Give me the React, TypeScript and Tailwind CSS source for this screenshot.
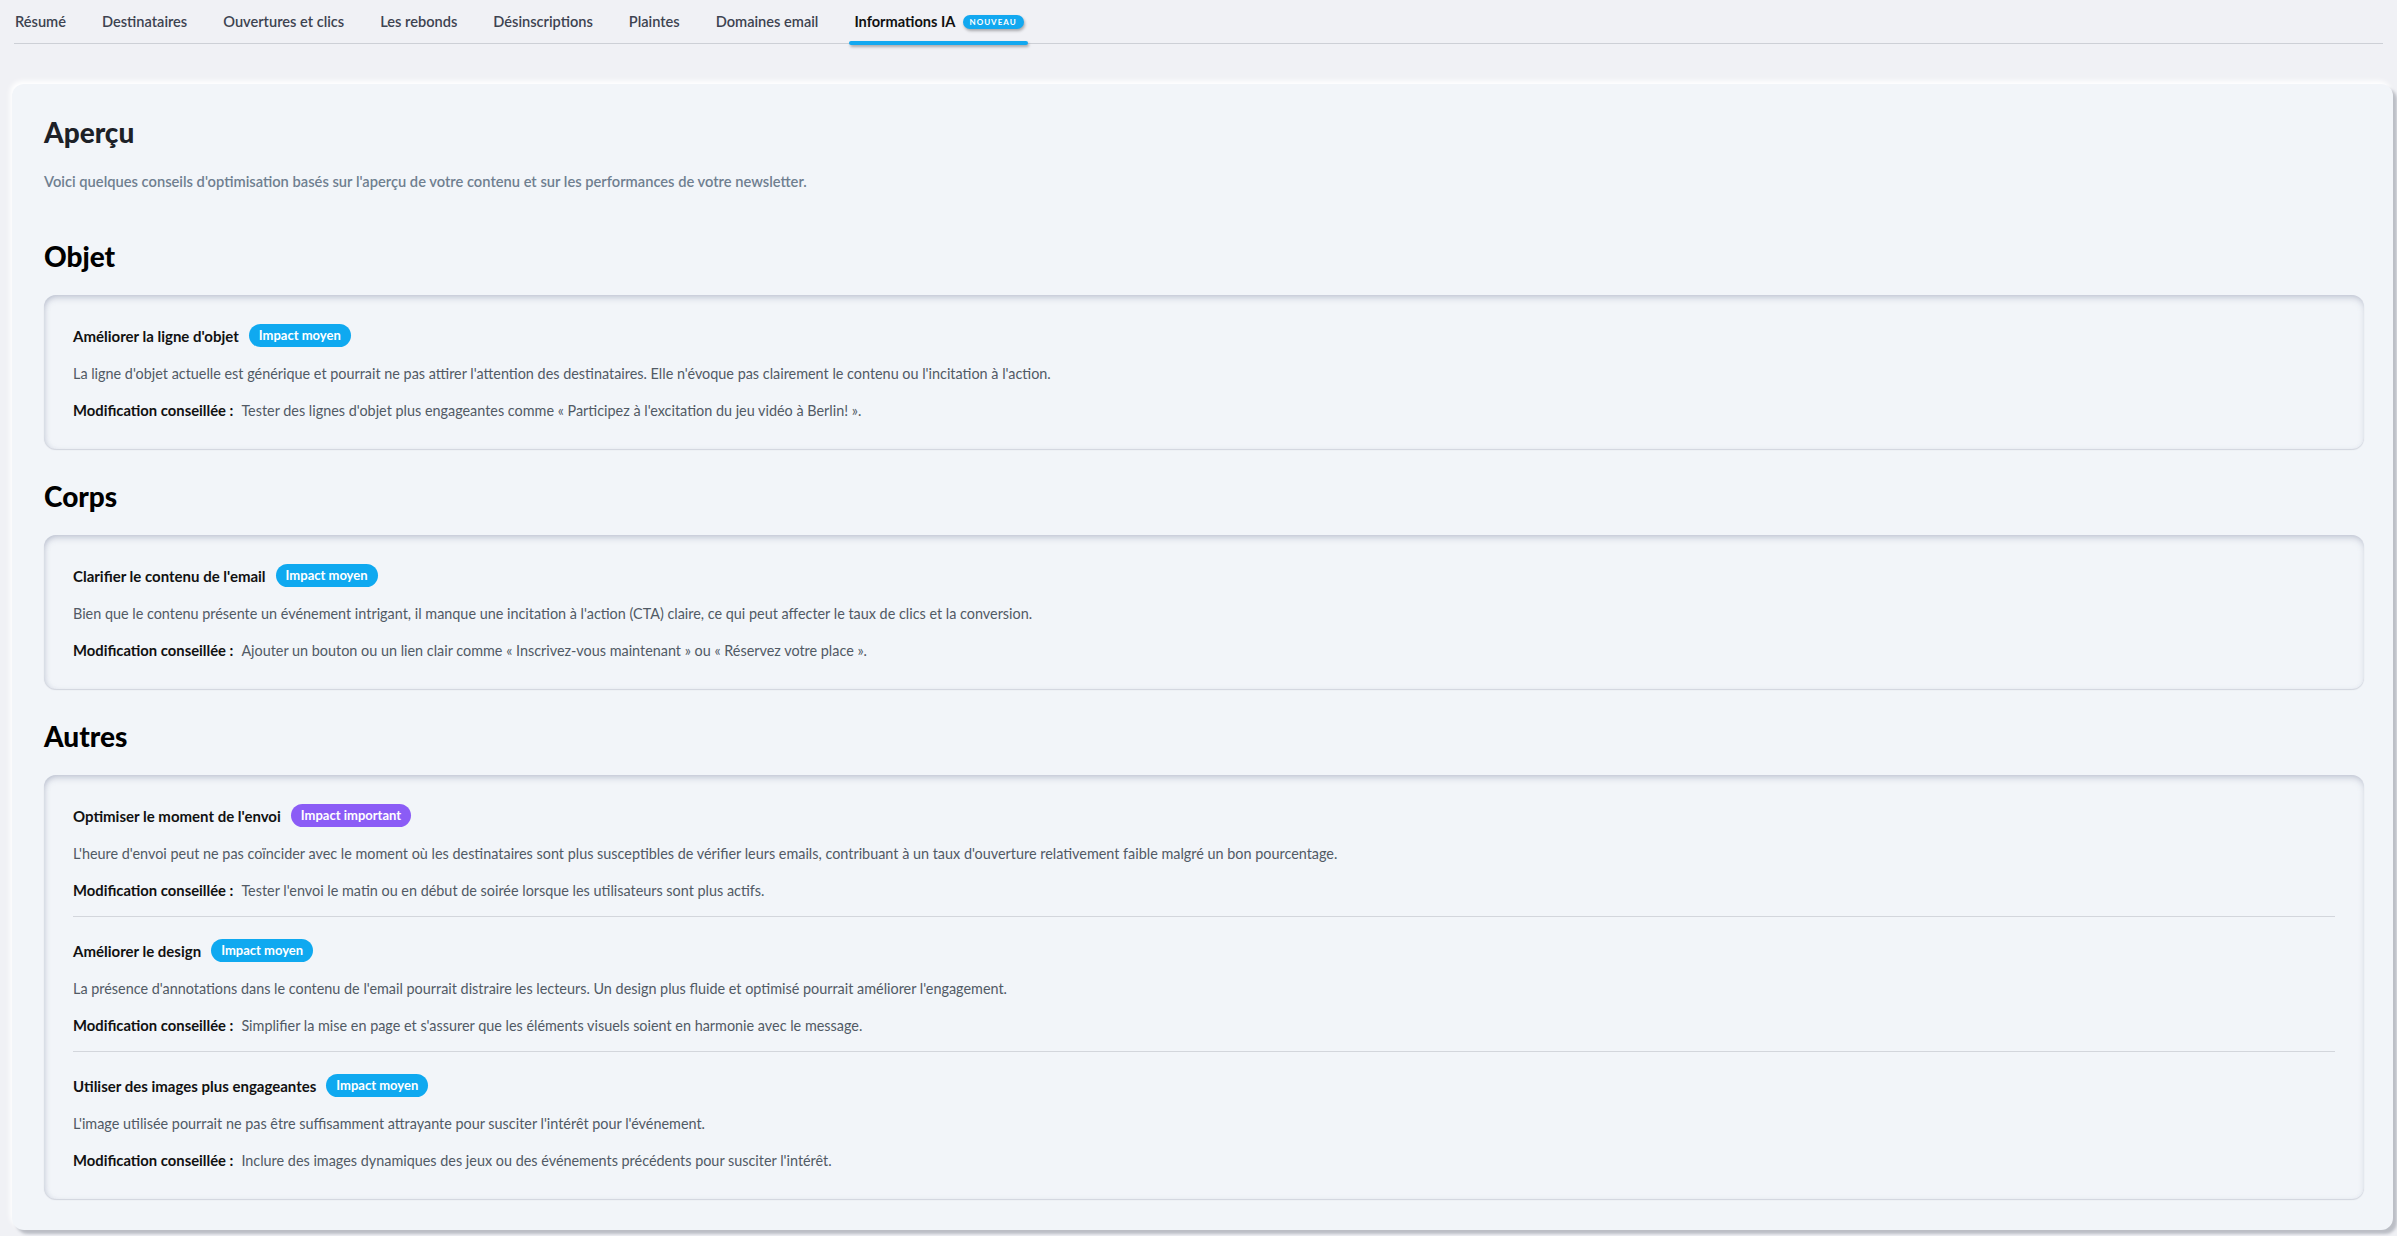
import React from 'react';

type Impact = 'moyen' | 'important';

type Tip = {
  title: string;
  impact: Impact;
  description: string;
  change: string;
};

const tabs = [
  'Résumé',
  'Destinataires',
  'Ouvertures et clics',
  'Les rebonds',
  'Désinscriptions',
  'Plaintes',
  'Domaines email',
];

const sections: { name: string; tips: Tip[] }[] = [
  {
    name: 'Objet',
    tips: [
      {
        title: "Améliorer la ligne d'objet",
        impact: 'moyen',
        description:
          "La ligne d'objet actuelle est générique et pourrait ne pas attirer l'attention des destinataires. Elle n'évoque pas clairement le contenu ou l'incitation à l'action.",
        change: "Tester des lignes d'objet plus engageantes comme « Participez à l'excitation du jeu vidéo à Berlin! ».",
      },
    ],
  },
  {
    name: 'Corps',
    tips: [
      {
        title: "Clarifier le contenu de l'email",
        impact: 'moyen',
        description:
          "Bien que le contenu présente un événement intrigant, il manque une incitation à l'action (CTA) claire, ce qui peut affecter le taux de clics et la conversion.",
        change: 'Ajouter un bouton ou un lien clair comme « Inscrivez-vous maintenant » ou « Réservez votre place ».',
      },
    ],
  },
  {
    name: 'Autres',
    tips: [
      {
        title: "Optimiser le moment de l'envoi",
        impact: 'important',
        description:
          "L'heure d'envoi peut ne pas coïncider avec le moment où les destinataires sont plus susceptibles de vérifier leurs emails, contribuant à un taux d'ouverture relativement faible malgré un bon pourcentage.",
        change: "Tester l'envoi le matin ou en début de soirée lorsque les utilisateurs sont plus actifs.",
      },
      {
        title: 'Améliorer le design',
        impact: 'moyen',
        description:
          "La présence d'annotations dans le contenu de l'email pourrait distraire les lecteurs. Un design plus fluide et optimisé pourrait améliorer l'engagement.",
        change: "Simplifier la mise en page et s'assurer que les éléments visuels soient en harmonie avec le message.",
      },
      {
        title: 'Utiliser des images plus engageantes',
        impact: 'moyen',
        description: "L'image utilisée pourrait ne pas être suffisamment attrayante pour susciter l'intérêt pour l'événement.",
        change: "Inclure des images dynamiques des jeux ou des événements précédents pour susciter l'intérêt.",
      },
    ],
  },
];

function ImpactBadge({ impact }: { impact: Impact }) {
  if (impact === 'important') {
    return (
      <span className="inline-flex h-[23px] items-center rounded-full bg-[#8b5cf6] px-[10px] text-[13px] font-bold leading-none text-white">
        Impact important
      </span>
    );
  }
  return (
    <span className="inline-flex h-[23px] items-center rounded-full bg-[#0fa9f0] px-[10px] text-[13px] font-bold leading-none text-white">
      Impact moyen
    </span>
  );
}

function TipItem({ tip, last }: { tip: Tip; last: boolean }) {
  return (
    <div className={last ? '' : 'border-b border-[#d3d6dc] pb-[16px] mb-[22px]'}>
      <div className="flex h-[23px] items-center gap-[10px]">
        <span className="text-[15px] font-bold leading-[20px] text-[#111]">{tip.title}</span>
        <ImpactBadge impact={tip.impact} />
      </div>
      <p className="mt-[17px] h-[20px] text-[14.4px] leading-[20px] text-[#515a65]">{tip.description}</p>
      <p className="mt-[16px] flex h-[20px] items-baseline text-[14.4px] leading-[20px] text-[#515a65]">
        <span className="mr-[8px] text-[14.8px] font-bold text-[#111]">Modification conseillée :</span>
        <span>{tip.change}</span>
      </p>
    </div>
  );
}

export default function App() {
  return (
    <div className="min-h-screen bg-[#f0f1f5] pb-[4px] font-['Lato',sans-serif]">
      {/* Tabs */}
      <nav className="mx-[14px] flex h-[44px] items-start gap-[36px] border-b border-[#cdd0d6] pl-[1px]">
        {tabs.map((t) => (
          <div key={t} className="pt-[12px] text-[14.6px] font-semibold leading-[20px] text-[#3d4350]">
            {t}
          </div>
        ))}
        <div className="relative flex h-full items-start gap-[7px] pt-[12px]">
          <span className="text-[14.6px] font-bold leading-[20px] text-[#111]">Informations IA</span>
          <span className="mt-[3px] inline-flex h-[14px] items-center rounded-full bg-[#12a8f0] px-[7px] text-[8px] font-bold tracking-[1px] text-white shadow-[1px_2px_3px_rgba(0,0,0,0.3)]">
            NOUVEAU
          </span>
          <div className="absolute -left-[5px] -right-[4px] top-[41px] h-[4px] rounded-full bg-[#12a8f0] shadow-[1px_2px_3px_rgba(0,0,0,0.3)]" />
        </div>
      </nav>

      {/* Main card */}
      <div className="ml-[12px] mr-[4px] mt-[40px] rounded-[12px] bg-[#f2f5f9] px-[32px] pb-[31px] pt-[30px] shadow-[4px_4px_3px_rgba(90,95,110,0.35),-2px_-3px_5px_#ffffff]">
        <h1 className="text-[28px] font-black leading-[36px] text-[#1d2127]">Aperçu</h1>
        <p className="mt-[21px] text-[14.7px] font-semibold leading-[20px] text-[#6f7f90]">
          Voici quelques conseils d'optimisation basés sur l'aperçu de votre contenu et sur les performances de votre
          newsletter.
        </p>

        {sections.map((s, i) => (
          <section key={s.name} className={i === 0 ? 'mt-[47px]' : 'mt-[29px]'}>
            <h2 className="text-[28px] font-black leading-[36px] text-black">{s.name}</h2>
            <div className="mt-[21px] mr-[-3px] rounded-[12px] bg-[#f2f5f9] px-[29px] pb-[29px] pt-[29px] shadow-[inset_0_4px_7px_-2px_rgba(105,112,145,0.38),inset_3px_0_6px_-3px_rgba(105,112,145,0.22),0_1px_1px_rgba(150,155,170,0.35)]">
              {s.tips.map((tip, j) => (
                <TipItem key={tip.title} tip={tip} last={j === s.tips.length - 1} />
              ))}
            </div>
          </section>
        ))}
      </div>
    </div>
  );
}
